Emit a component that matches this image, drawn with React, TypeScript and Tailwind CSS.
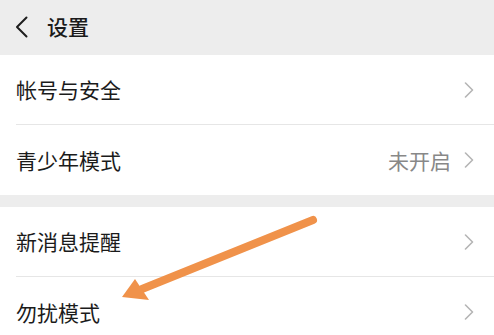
import React from "react";

function Chevron() {
  return (
    <svg width="10" height="16" viewBox="0 0 10 16" fill="none" className="shrink-0">
      <path d="M1.5 1 L8.5 8 L1.5 15" stroke="#b5b5b5" strokeWidth="1.6" strokeLinecap="round" strokeLinejoin="round" />
    </svg>
  );
}

function Row({ label, value, divider }: { label: string; value?: string; divider?: boolean }) {
  return (
    <div className="bg-white pl-4">
      <div className={`flex h-[70px] items-center pr-5 ${divider ? "border-b border-[#e6e6e6]" : ""}`}>
        <span className="flex-1 text-[21px] leading-none text-[#1b1b1b]">{label}</span>
        {value ? <span className="mr-[13px] text-[21px] leading-none text-[#888888]">{value}</span> : null}
        <Chevron />
      </div>
    </div>
  );
}

export default function App() {
  return (
    <div
      className="relative h-[335px] w-[494px] overflow-hidden bg-[#ededed]"
      style={{ fontFamily: '"Noto Sans CJK SC", "Noto Sans", sans-serif' }}
    >
      <div className="flex h-[55px] items-center bg-[#ededed] pb-[2px] pl-[15px]">
        <svg width="13" height="22" viewBox="0 0 13 22" fill="none">
          <path d="M11.5 1.5 L2 11 L11.5 20.5" stroke="#1e1e1e" strokeWidth="2" strokeLinecap="round" strokeLinejoin="round" />
        </svg>
        <span className="ml-[19px] text-[21px] font-medium leading-none text-[#1b1b1b]">设置</span>
      </div>
      <Row label="帐号与安全" divider />
      <Row label="青少年模式" value="未开启" />
      <div className="h-[12px]" />
      <Row label="新消息提醒" divider />
      <Row label="勿扰模式" />
      <svg className="pointer-events-none absolute left-0 top-0" width="494" height="335" viewBox="0 0 494 335">
        <line x1="313" y1="220" x2="142" y2="289" stroke="#f0924a" strokeWidth="8" strokeLinecap="round" />
        <polygon points="122,297 135,279 149,300" fill="#f0924a" />
      </svg>
    </div>
  );
}
